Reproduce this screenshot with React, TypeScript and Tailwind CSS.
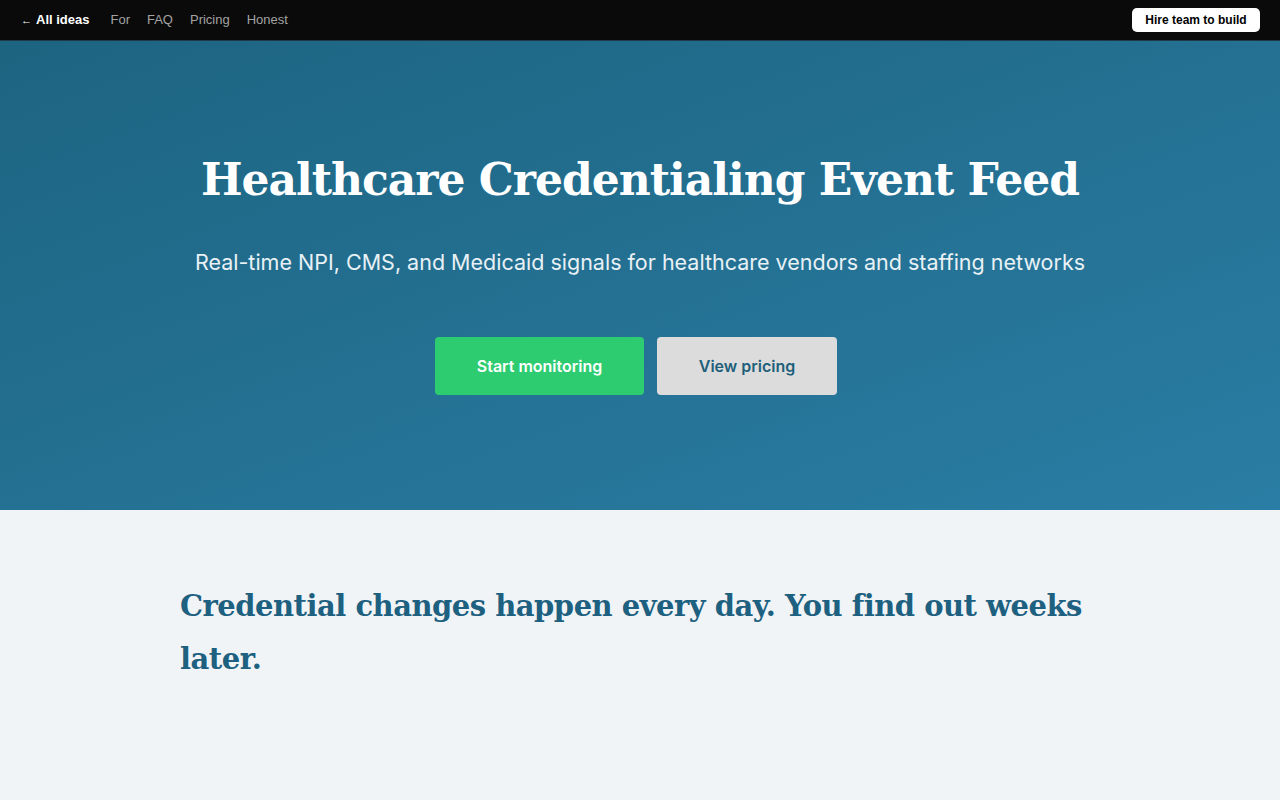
import React from 'react';

const sans = "font-['Liberation_Sans',Arial,sans-serif]";
const inter = "font-['Inter','Noto_Sans',sans-serif]";
const slab = "font-['DejaVu_Serif','Liberation_Serif',serif]";

// Top bar with back link and section anchors
function TopBar() {
  const links = ['For', 'FAQ', 'Pricing', 'Honest'];
  return (
    <header className={`${sans} h-[41px] bg-[#0a0a0a] border-b border-[#1f3a48] flex items-center justify-between pl-[21px] pr-5`}>
      <nav className="flex items-center gap-[17px] text-[13px]">
        <a href="#" className="text-white font-bold mr-1">
          <span className="text-[11px] mr-1">←</span>All ideas
        </a>
        {links.map((l) => (
          <a key={l} href={`#${l.toLowerCase()}`} className="text-[#a3a3a3]">
            {l}
          </a>
        ))}
      </nav>
      <button className="h-6 w-32 bg-white rounded-[5px] text-[12px] font-bold text-black">
        Hire team to build
      </button>
    </header>
  );
}

// Hero banner with title, tagline and calls to action
function Hero() {
  return (
    <section className="h-[469px] bg-gradient-to-br from-[#1d6481] to-[#2a7da4] flex flex-col items-center pt-[108px]">
      <h1 className={`${slab} text-white font-bold text-[44px] leading-[62px] tracking-[-1px]`}>
        Healthcare Credentialing Event Feed
      </h1>
      <p className={`${inter} mt-[37px] text-[21.5px] leading-[28px] text-[#e8f1f5]`}>
        Real-time NPI, CMS, and Medicaid signals for healthcare vendors and staffing networks
      </p>
      <div className={`${inter} mt-[61px] -ml-2 flex gap-[13px]`}>
        <button className="w-[209px] h-[58px] rounded-[4px] bg-[#2ecc71] text-white font-semibold text-[16px]">
          Start monitoring
        </button>
        <button className="w-[180px] h-[58px] rounded-[4px] bg-[#dcdcdc] text-[#1e5f7a] font-semibold text-[16px]">
          View pricing
        </button>
      </div>
    </section>
  );
}

// Problem statement section
function Problem() {
  return (
    <section className="bg-[#f0f4f7] min-h-[290px] pt-[70px]">
      <div className="w-[920px] mx-auto">
        <h2 className={`${slab} text-[#1d6080] font-bold text-[29px] leading-[53px] tracking-[-0.5px]`}>
          Credential changes happen every day. You find out weeks later.
        </h2>
      </div>
    </section>
  );
}

export default function App() {
  return (
    <div className="min-h-screen bg-[#f0f4f7]">
      <TopBar />
      <Hero />
      <Problem />
    </div>
  );
}
